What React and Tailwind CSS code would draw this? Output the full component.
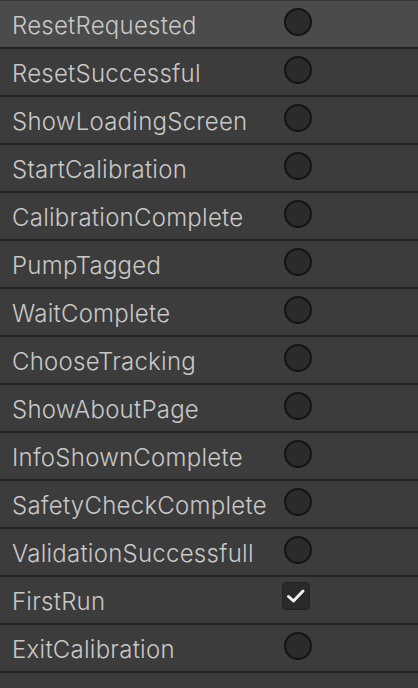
const items = [
  { name: "ResetRequested", type: "bool", active: true },
  { name: "ResetSuccessful", type: "bool" },
  { name: "ShowLoadingScreen", type: "bool" },
  { name: "StartCalibration", type: "bool" },
  { name: "CalibrationComplete", type: "bool" },
  { name: "PumpTagged", type: "bool" },
  { name: "WaitComplete", type: "bool" },
  { name: "ChooseTracking", type: "bool" },
  { name: "ShowAboutPage", type: "bool" },
  { name: "InfoShownComplete", type: "bool" },
  { name: "SafetyCheckComplete", type: "bool" },
  { name: "ValidationSuccessfull", type: "bool" },
  { name: "FirstRun", type: "check" },
  { name: "ExitCalibration", type: "bool" },
];

function Toggle({ type }) {
  if (type === "check") {
    return (
      <div className="w-[28px] h-[28px] ml-[282px] mt-[-2px] rounded-[4px] bg-[#2a2a2a] border border-[#232323] flex items-center justify-center">
        <svg width="24" height="24" viewBox="0 0 24 24" fill="none">
          <path d="M4.5 12.5 L9.5 17 L19 7" stroke="#f2f2f2" strokeWidth="3" strokeLinecap="round" strokeLinejoin="round" />
        </svg>
      </div>
    );
  }
  return <div className="w-[28px] h-[28px] ml-[284px] rounded-full bg-[#2b2b2b] border-2 border-[#141414]" />;
}

export default function App() {
  return (
    <div className="w-[418px] h-[688px] bg-[#3c3c3c] overflow-hidden" style={{ fontFamily: "Inter, 'Noto Sans', sans-serif" }}>
      <div className="h-[1px] bg-[#383838]" />
      {items.map((item) => (
        <div
          key={item.name}
          className={`relative h-[48px] border-b-2 border-[#232323] ${item.active ? "bg-[#4b4b4b]" : "bg-[#3c3c3c]"}`}
        >
          <div className="absolute left-0 top-[7px]">
            <Toggle type={item.type} />
          </div>
          <div className="relative pl-[12px] pt-[10px] text-[24px] leading-[30px] font-light tracking-[0.25px] text-[#c8c8c8] whitespace-nowrap">
            {item.name}
          </div>
        </div>
      ))}
    </div>
  );
}
